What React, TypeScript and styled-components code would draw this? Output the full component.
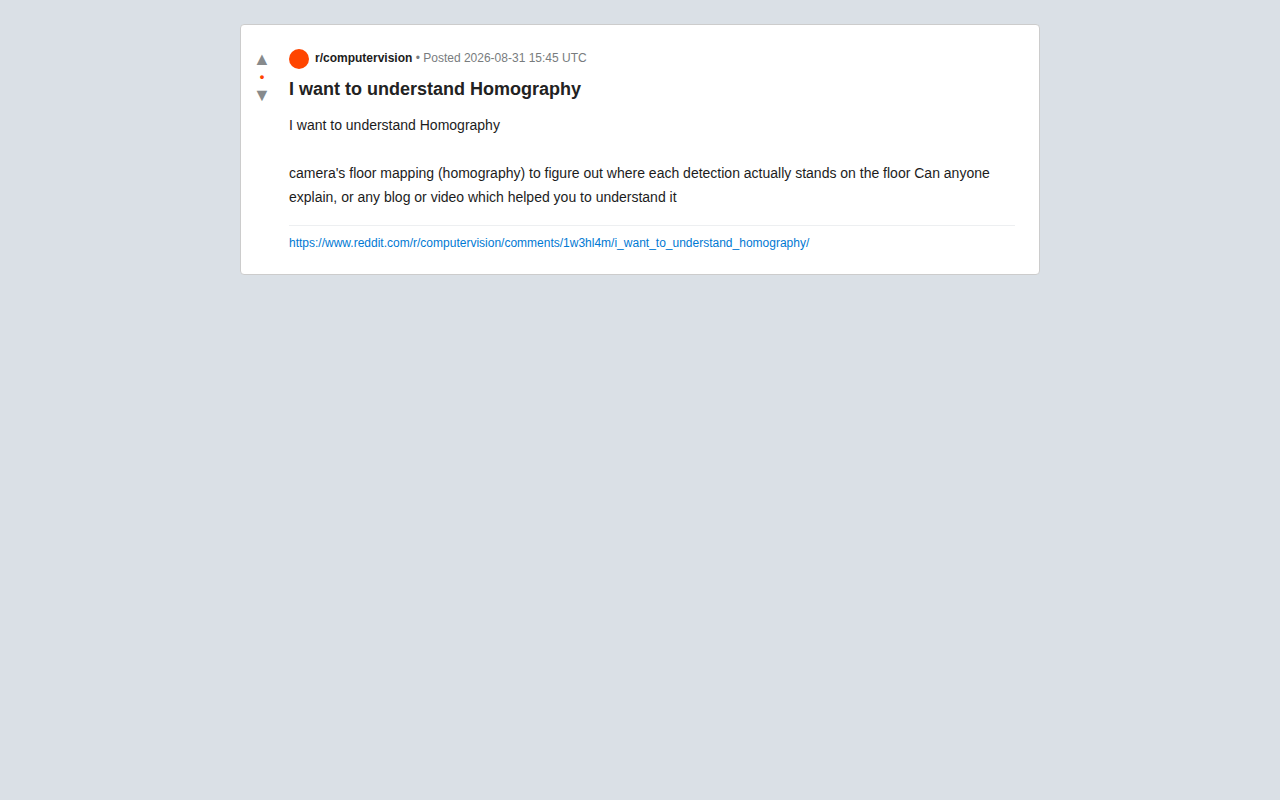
import React from "react";
import styled, { createGlobalStyle } from "styled-components";

const GlobalStyle = createGlobalStyle`
  * { box-sizing: border-box; }
  body {
    margin: 0;
    padding: 24px;
    background: #dae0e6;
    font-family: "Liberation Sans", Arial, sans-serif;
    color: #1c1c1c;
  }
`;

const Card = styled.article`
  display: flex;
  max-width: 800px;
  margin: 0 auto;
  padding: 24px 24px 24px 8px;
  background: #fff;
  border: 1px solid #ccc;
  border-radius: 4px;
`;

const Votes = styled.div`
  display: flex;
  flex-direction: column;
  align-items: center;
  flex: none;
  width: 26px;
  margin-right: 14px;
`;

const VoteButton = styled.button`
  padding: 0;
  border: 0;
  background: none;
  color: #878a8c;
  font-family: "Liberation Sans", "DejaVu Sans", sans-serif;
  font-size: 18px;
  line-height: 20px;
  cursor: pointer;
`;

const Score = styled.span`
  color: #ff4500;
  font-size: 13px;
  font-weight: 700;
  line-height: 16px;
`;

const Content = styled.div`
  flex: 1;
  min-width: 0;
`;

const Meta = styled.div`
  display: flex;
  gap: 6px;
  margin-bottom: 8px;
  color: #787c7e;
  font-size: 12px;
  line-height: 18px;
`;

const Avatar = styled.span`
  flex: none;
  width: 20px;
  height: 20px;
  border-radius: 50%;
  background: #ff4500;
`;

const Community = styled.strong`
  color: #1c1c1c;
`;

const Title = styled.h1`
  margin: 0 0 12px;
  color: #222;
  font-size: 18px;
  line-height: 24px;
`;

const Body = styled.div`
  font-size: 14px;
  line-height: 24px;
  white-space: pre-wrap;
`;

const Source = styled.footer`
  margin-top: 16px;
  padding-top: 10px;
  border-top: 1px solid #edeff1;
  font-size: 12px;
  line-height: 14px;
`;

const SourceLink = styled.a`
  color: #0079d3;
  text-decoration: none;
  overflow-wrap: anywhere;
`;

const url =
  "https://www.reddit.com/r/computervision/comments/1w3hl4m/i_want_to_understand_homography/";

const text = `I want to understand Homography

camera's floor mapping (homography) to figure out where each detection actually stands on the floor Can anyone explain, or any blog or video which helped you to understand it`;

export default function App() {
  return (
    <>
      <GlobalStyle />
      <Card>
        <Votes>
          <VoteButton type="button">▲</VoteButton>
          <Score>•</Score>
          <VoteButton type="button">▼</VoteButton>
        </Votes>
        <Content>
          <Meta>
            <Avatar />
            <span>
              <Community>r/computervision</Community> • Posted 2026-08-31 15:45 UTC
            </span>
          </Meta>
          <Title>I want to understand Homography</Title>
          <Body>{text}</Body>
          <Source>
            <SourceLink href={url}>{url}</SourceLink>
          </Source>
        </Content>
      </Card>
    </>
  );
}
